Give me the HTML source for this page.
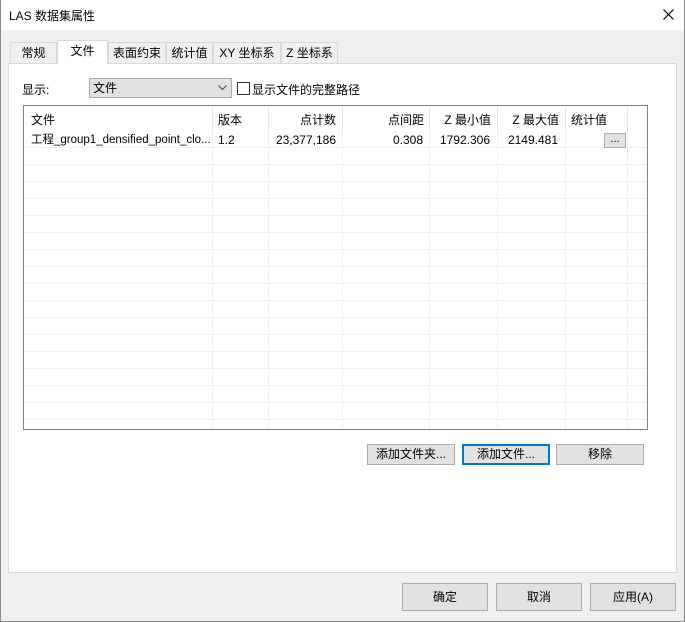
<!DOCTYPE html><html><head><meta charset="utf-8"><style>
*{box-sizing:border-box;margin:0;padding:0}
body{width:685px;height:622px;background:#f0f0f0;font-family:"Liberation Sans","Noto Sans CJK SC",sans-serif;font-size:12px;color:#000;position:relative;overflow:hidden}
.a{position:absolute}
.win{left:0;top:0;width:685px;height:622px;border:1px solid #888;border-top:none}
.title{left:1px;top:0;width:683px;height:30px;background:#fff}
.btn{position:absolute;background:#e1e1e1;border:1px solid #adadad;text-align:center;line-height:18px}
.tab{position:absolute;top:42px;height:21px;border:1px solid #d9d9d9;border-bottom:none;background:#f0f0f0;text-align:center;line-height:20px;font-size:12px}
.grid{left:23px;top:105px;width:625px;height:325px;border:1px solid #828282;background:#fff;overflow:hidden}
.vl{position:absolute;top:0;width:1px;height:325px;background:#f0f0f0}
.hl{position:absolute;left:0;width:625px;height:1px;background:#f0f0f0}
.c{position:absolute;font-size:12px;line-height:16px}
</style></head><body>
<div class="a win"></div>
<div class="a title"></div>
<div class="a" style="left:9px;top:7px;font-size:12px">LAS 数据集属性</div>
<svg class="a" style="left:663px;top:9px" width="11" height="11"><path d="M0.5 0.5L10.5 10.5M10.5 0.5L0.5 10.5" stroke="#000" stroke-width="1.2"/></svg>
<div class="a" style="left:8px;top:63px;width:669px;height:510px;background:#fff;border:1px solid #d9d9d9"></div>
<div class="tab" style="left:10px;width:47px">常规</div>
<div class="tab" style="left:57px;top:40px;height:24px;width:51px;background:#fff;border-color:#d9d9d9">文件</div>
<div class="tab" style="left:108px;width:58px">表面约束</div>
<div class="tab" style="left:166px;width:47px">统计值</div>
<div class="tab" style="left:213px;width:68px">XY 坐标系</div>
<div class="tab" style="left:281px;width:57px">Z 坐标系</div>
<div class="a" style="left:22px;top:81px">显示:</div>
<div class="a" style="left:89px;top:78px;width:143px;height:20px;background:#e1e1e1;border:1px solid #adadad;padding-left:3px;line-height:18px">文件</div>
<svg class="a" style="left:218px;top:85px" width="9" height="6"><path d="M0.5 0.5L4.5 4.5L8.5 0.5" stroke="#444" fill="none"/></svg>
<div class="a" style="left:237px;top:82px;width:13px;height:13px;border:1px solid #333;background:#fff"></div>
<div class="a" style="left:252px;top:81px">显示文件的完整路径</div>
<div class="a grid">
<div class="vl" style="left:188px"></div><div class="vl" style="left:244px"></div><div class="vl" style="left:318px"></div><div class="vl" style="left:405px"></div><div class="vl" style="left:473px"></div><div class="vl" style="left:541px"></div><div class="vl" style="left:603px"></div>
<div class="hl" style="top:41px"></div><div class="hl" style="top:58px"></div><div class="hl" style="top:75px"></div><div class="hl" style="top:92px"></div><div class="hl" style="top:109px"></div><div class="hl" style="top:126px"></div><div class="hl" style="top:143px"></div><div class="hl" style="top:160px"></div><div class="hl" style="top:177px"></div><div class="hl" style="top:194px"></div><div class="hl" style="top:211px"></div><div class="hl" style="top:228px"></div><div class="hl" style="top:245px"></div><div class="hl" style="top:262px"></div><div class="hl" style="top:279px"></div><div class="hl" style="top:296px"></div><div class="hl" style="top:313px"></div>
<div style="position:absolute;left:0;top:0;width:625px;height:24px;background:#fff"></div>
<div class="vl" style="left:188px;height:24px;background:#e5e5e5"></div><div class="vl" style="left:244px;height:24px;background:#e5e5e5"></div><div class="vl" style="left:318px;height:24px;background:#e5e5e5"></div><div class="vl" style="left:405px;height:24px;background:#e5e5e5"></div><div class="vl" style="left:473px;height:24px;background:#e5e5e5"></div><div class="vl" style="left:541px;height:24px;background:#e5e5e5"></div><div class="vl" style="left:603px;height:24px;background:#e5e5e5"></div>
<div class="c" style="left:7px;top:6px">文件</div>
<div class="c" style="left:194px;top:6px">版本</div>
<div class="c" style="left:244px;width:68px;text-align:right;top:6px">点计数</div>
<div class="c" style="left:318px;width:82px;text-align:right;top:6px">点间距</div>
<div class="c" style="left:405px;width:62px;text-align:right;top:6px">Z 最小值</div>
<div class="c" style="left:473px;width:62px;text-align:right;top:6px">Z 最大值</div>
<div class="c" style="left:547px;top:6px">统计值</div>
<div class="c" style="left:7px;top:26px;font-size:11.5px">工程_group1_densified_point_clo...</div>
<div class="c" style="left:194px;top:26px">1.2</div>
<div class="c" style="left:244px;width:68px;text-align:right;top:26px">23,377,186</div>
<div class="c" style="left:318px;width:81px;text-align:right;top:26px">0.308</div>
<div class="c" style="left:405px;width:61px;text-align:right;top:26px">1792.306</div>
<div class="c" style="left:473px;width:61px;text-align:right;top:26px">2149.481</div>
<div class="btn" style="left:580px;top:27px;width:22px;height:15px;line-height:11px;font-size:11px">...</div>
</div>
<div class="btn" style="left:367px;top:444px;width:88px;height:21px">添加文件夹...</div>
<div class="btn" style="left:462px;top:444px;width:88px;height:21px;border:2px solid #0078d7;line-height:17px">添加文件...</div>
<div class="btn" style="left:556px;top:444px;width:88px;height:21px">移除</div>
<div class="btn" style="left:402px;top:583px;width:86px;height:28px;line-height:26px">确定</div>
<div class="btn" style="left:496px;top:583px;width:86px;height:28px;line-height:26px">取消</div>
<div class="btn" style="left:590px;top:583px;width:86px;height:28px;line-height:26px">应用(A)</div>
</body></html>
